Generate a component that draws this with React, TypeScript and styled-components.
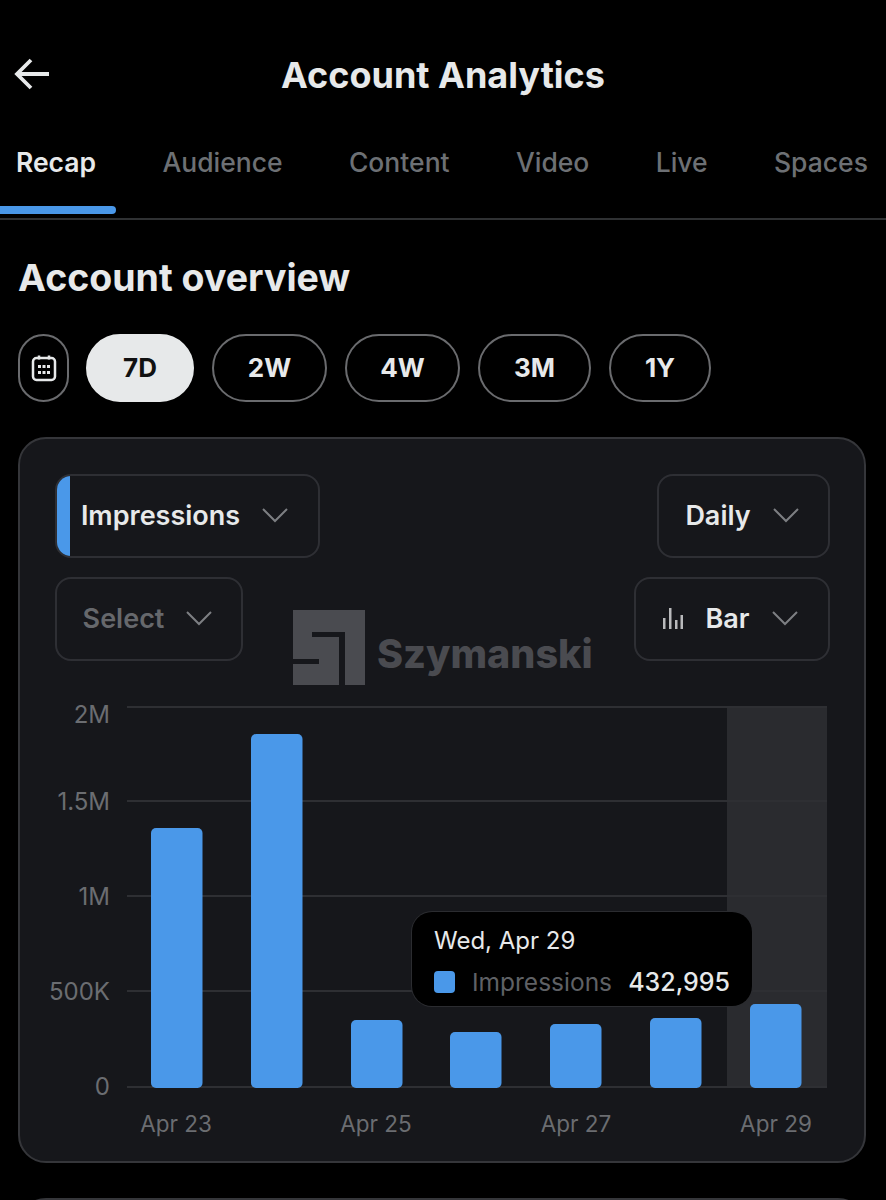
import React from 'react';
import styled, { createGlobalStyle } from 'styled-components';

const bars = [
  { left: 151, top: 828 },
  { left: 251, top: 734 },
  { left: 351, top: 1020 },
  { left: 450, top: 1032 },
  { left: 550, top: 1024 },
  { left: 650, top: 1018 },
  { left: 750, top: 1004 },
];

const tabs = ['Recap', 'Audience', 'Content', 'Video', 'Live', 'Spaces'];
const ranges = [
  { label: '7D', width: 108 },
  { label: '2W', width: 115 },
  { label: '4W', width: 115 },
  { label: '3M', width: 113 },
  { label: '1Y', width: 102 },
];
const yTicks = [
  { label: '2M', y: 707, labelY: 723 },
  { label: '1.5M', y: 801, labelY: 810 },
  { label: '1M', y: 896, labelY: 905 },
  { label: '500K', y: 991, labelY: 1000 },
  { label: '0', y: 1087, labelY: 1095 },
];
const xTicks = [
  { label: 'Apr 23', x: 176 },
  { label: 'Apr 25', x: 376 },
  { label: 'Apr 27', x: 576 },
  { label: 'Apr 29', x: 776 },
];

const Chevron = () => (
  <svg width="26" height="16" viewBox="0 0 26 16" fill="none">
    <path d="M1 2l12 12L25 2" stroke="#7d7f83" strokeWidth="2" />
  </svg>
);

const App: React.FC = () => {
  return (
    <Page>
      <GlobalStyle />
      <Header>
        <BackIcon width="36" height="32" viewBox="0 0 36 32" fill="none">
          <path d="M35 16H3M17 2L3 16L17 30" stroke="#e7e9ea" strokeWidth="3.800" />
        </BackIcon>
        <Title>Account Analytics</Title>
      </Header>
      <Tabs>
        {tabs.map((tab) => (
          <Tab key={tab} $active={tab === 'Recap'}>
            {tab}
          </Tab>
        ))}
        <TabIndicator />
      </Tabs>
      <Heading>Account overview</Heading>
      <RangeRow>
        <CalendarPill>
          <svg width="26" height="28" viewBox="0 0 26 28" fill="none">
            <rect x="2" y="4" width="22" height="22" rx="3.500" stroke="#e7e9ea" strokeWidth="2.500" />
            <path d="M8 1.500v4M18 1.500v4" stroke="#e7e9ea" strokeWidth="2.500" />
            <g fill="#e7e9ea">
              <rect x="7" y="11" width="3" height="3" />
              <rect x="11.500" y="11" width="3" height="3" />
              <rect x="16" y="11" width="3" height="3" />
              <rect x="7" y="17" width="3" height="3" />
              <rect x="11.500" y="17" width="3" height="3" />
              <rect x="16" y="17" width="3" height="3" />
            </g>
          </svg>
        </CalendarPill>
        {ranges.map((range) => (
          <RangePill key={range.label} $active={range.label === '7D'} $width={range.width}>
            {range.label}
          </RangePill>
        ))}
      </RangeRow>
      <Card>
        <Controls>
          <ControlRow>
            <MetricSelect $width={265}>
              <SelectLabel>Impressions</SelectLabel>
              <Chevron />
            </MetricSelect>
            <Select $width={173}>
              <SelectLabel>Daily</SelectLabel>
              <Chevron />
            </Select>
          </ControlRow>
          <ControlRow>
            <Select $width={188}>
              <SelectLabel $muted>Select</SelectLabel>
              <Chevron />
            </Select>
            <Select $width={196}>
              <svg width="20" height="22" viewBox="0 0 20 22" fill="#b9babc">
                <rect x="0" y="11" width="2.500" height="11" />
                <rect x="6" y="1" width="2.500" height="21" />
                <rect x="12" y="13" width="2.500" height="9" />
                <rect x="17.500" y="8" width="2.500" height="14" />
              </svg>
              <SelectLabel>Bar</SelectLabel>
              <Chevron />
            </Select>
          </ControlRow>
        </Controls>
        <Watermark>
          <svg width="72" height="75" viewBox="0 0 72 75">
            <rect width="72" height="75" fill="#4a4b50" />
            <path d="M19 22H52V75H46V27H19ZM0 49H26V54H0Z" fill="#16171b" />
          </svg>
          <WatermarkText>Szymanski</WatermarkText>
        </Watermark>
        <ChartArea>
          <svg width="848" height="480" viewBox="18 697 848 480">
            <rect x="727" y="706" width="100" height="381" fill="#2a2b2f" />
            {yTicks.map((tick) => (
              <line key={tick.label} x1="127" x2="827" y1={tick.y} y2={tick.y} stroke="#2e2f33" strokeWidth="2" />
            ))}
            {bars.map((bar) => (
              <rect key={bar.left} x={bar.left} y={bar.top} width="51.500" height={1088 - bar.top} rx="5" fill="#4a98e9" />
            ))}
            {yTicks.map((tick) => (
              <AxisText key={tick.label} x="110" y={tick.labelY} textAnchor="end">
                {tick.label}
              </AxisText>
            ))}
            {xTicks.map((tick) => (
              <DateText key={tick.label} x={tick.x} y="1132" textAnchor="middle">
                {tick.label}
              </DateText>
            ))}
          </svg>
          <Tooltip>
            <TooltipDate>Wed, Apr 29</TooltipDate>
            <TooltipRow>
              <Swatch />
              <TooltipMetric>Impressions</TooltipMetric>
              <TooltipValue>432,995</TooltipValue>
            </TooltipRow>
          </Tooltip>
        </ChartArea>
      </Card>
      <NextCard />
    </Page>
  );
};

const GlobalStyle = createGlobalStyle`
  html, body {
    margin: 0;
    background: #000;
    font-family: Inter, "Liberation Sans", sans-serif;
  }
`;

const Page = styled.div`
  width: 886px;
  height: 1200px;
  overflow: hidden;
  background: #000;
  color: #e7e9ea;
`;

const Header = styled.header`
  position: relative;
  display: flex;
  align-items: center;
  justify-content: center;
  height: 150px;
`;

const BackIcon = styled.svg`
  position: absolute;
  left: 14px;
  top: 58px;
`;

const Title = styled.h1`
  margin: 0;
  font-size: 36px;
  line-height: 150px;
  font-weight: 700;
`;

const Tabs = styled.nav`
  position: relative;
  display: flex;
  justify-content: space-between;
  height: 68px;
  padding: 0 18px 0 16px;
  border-bottom: 2px solid #2f3133;
  box-sizing: content-box;
`;

const Tab = styled.div<{ $active?: boolean }>`
  font-size: 26.500px;
  line-height: 24px;
  font-weight: ${({ $active }) => ($active ? 600 : 500)};
  color: ${({ $active }) => ($active ? '#e7e9ea' : '#6d7074')};
`;

const TabIndicator = styled.span`
  position: absolute;
  left: 0;
  bottom: 4px;
  width: 116px;
  height: 8px;
  background: #4a98e9;
  border-radius: 0 4px 4px 0;
`;

const Heading = styled.h2`
  margin: 35px 0 0 18px;
  font-size: 37.500px;
  line-height: 46px;
  font-weight: 700;
`;

const RangeRow = styled.div`
  display: flex;
  gap: 18px;
  margin: 33px 0 0 18px;
`;

const CalendarPill = styled.div`
  display: flex;
  align-items: center;
  justify-content: center;
  width: 51px;
  height: 68px;
  margin-right: -1px;
  box-sizing: border-box;
  border: 2px solid #6a6b6e;
  border-radius: 26px;
`;

const RangePill = styled.div<{ $active?: boolean; $width: number }>`
  display: flex;
  align-items: center;
  justify-content: center;
  width: ${({ $width }) => $width}px;
  height: 68px;
  padding-bottom: 2px;
  box-sizing: border-box;
  border: 2px solid ${({ $active }) => ($active ? '#e7e9ea' : '#6a6b6e')};
  border-radius: 34px;
  background: ${({ $active }) => ($active ? '#e7e9ea' : 'transparent')};
  color: ${({ $active }) => ($active ? '#111' : '#e7e9ea')};
  font-size: 26px;
  font-weight: 700;
`;

const Card = styled.section`
  position: relative;
  width: 848px;
  height: 726px;
  margin: 35px 0 0 18px;
  box-sizing: border-box;
  background: #16171b;
  border: 2px solid #35363a;
  border-radius: 28px;
`;

const Controls = styled.div`
  display: flex;
  flex-direction: column;
  gap: 19px;
  padding: 35px 34px 0 35px;
`;

const ControlRow = styled.div`
  display: flex;
  justify-content: space-between;
`;

const Select = styled.div<{ $width: number }>`
  display: flex;
  align-items: center;
  justify-content: center;
  gap: 22px;
  width: ${({ $width }) => $width}px;
  height: 84px;
  padding: 0 3px 2px 0;
  box-sizing: border-box;
  border: 2px solid #2e2f34;
  border-radius: 16px;
`;

const MetricSelect = styled(Select)`
  position: relative;
  overflow: hidden;
  padding-right: 6px;

  &::before {
    content: '';
    position: absolute;
    left: -2px;
    top: -2px;
    bottom: -2px;
    width: 15px;
    background: #4a98e9;
  }
`;

const SelectLabel = styled.span<{ $muted?: boolean }>`
  font-size: 27px;
  font-weight: 600;
  color: ${({ $muted }) => ($muted ? '#66686c' : '#e7e9ea')};
`;

const Watermark = styled.div`
  position: absolute;
  left: 273px;
  top: 171px;
  display: flex;
  align-items: center;
  gap: 12px;
`;

const WatermarkText = styled.span`
  margin-top: 12px;
  font-family: Inter, sans-serif;
  font-size: 39.500px;
  font-weight: 800;
  color: #4a4b50;
`;

const ChartArea = styled.div`
  position: absolute;
  left: -2px;
  top: 258px;
  width: 848px;
  height: 480px;
`;

const AxisText = styled.text`
  font-size: 24px;
  fill: #6b6d71;
`;

const DateText = styled(AxisText)`
  font-size: 22.500px;
`;

const Tooltip = styled.div`
  position: absolute;
  left: 394px;
  top: 215px;
  width: 340px;
  height: 94px;
  padding: 14px 22px 0;
  box-sizing: border-box;
  background: #000;
  border-radius: 20px;
  box-shadow: 0 0 0 1px #2b2c30;
`;

const TooltipDate = styled.div`
  font-size: 24px;
  line-height: 30px;
  color: #e7e9ea;
`;

const TooltipRow = styled.div`
  display: flex;
  align-items: center;
  margin-top: 10px;
  line-height: 32px;
`;

const Swatch = styled.span`
  width: 21px;
  height: 22px;
  margin-right: 17px;
  border-radius: 4px;
  background: #4a98e9;
`;

const TooltipMetric = styled.span`
  font-size: 24.500px;
  color: #5f6165;
`;

const TooltipValue = styled.span`
  margin-left: auto;
  font-size: 25px;
  font-weight: 500;
  color: #e7e9ea;
`;

const NextCard = styled.div`
  width: 848px;
  height: 100px;
  margin: 35px 0 0 18px;
  box-sizing: border-box;
  border: 2px solid #35363a;
  border-radius: 28px;
`;

export default App;
